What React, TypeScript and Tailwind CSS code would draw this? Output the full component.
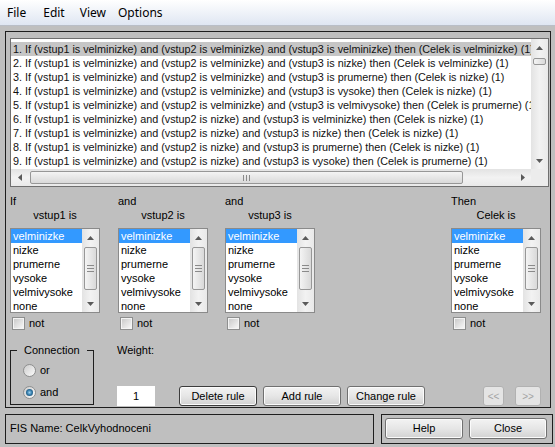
import clsx from 'clsx';

const rules = [
  '1. If (vstup1 is velminizke) and (vstup2 is velminizke) and (vstup3 is velminizke) then (Celek is velminizke) (1)',
  '2. If (vstup1 is velminizke) and (vstup2 is velminizke) and (vstup3 is nizke) then (Celek is velminizke) (1)',
  '3. If (vstup1 is velminizke) and (vstup2 is velminizke) and (vstup3 is prumerne) then (Celek is nizke) (1)',
  '4. If (vstup1 is velminizke) and (vstup2 is velminizke) and (vstup3 is vysoke) then (Celek is nizke) (1)',
  '5. If (vstup1 is velminizke) and (vstup2 is velminizke) and (vstup3 is velmivysoke) then (Celek is prumerne) (1)',
  '6. If (vstup1 is velminizke) and (vstup2 is nizke) and (vstup3 is velminizke) then (Celek is nizke) (1)',
  '7. If (vstup1 is velminizke) and (vstup2 is nizke) and (vstup3 is nizke) then (Celek is nizke) (1)',
  '8. If (vstup1 is velminizke) and (vstup2 is nizke) and (vstup3 is prumerne) then (Celek is nizke) (1)',
  '9. If (vstup1 is velminizke) and (vstup2 is nizke) and (vstup3 is vysoke) then (Celek is prumerne) (1)',
];

const terms = ['velminizke', 'nizke', 'prumerne', 'vysoke', 'velmivysoke', 'none'];

const Arrow = ({ dir }: { dir: 'up' | 'down' | 'left' | 'right' }) => {
  const vert = dir === 'up' || dir === 'down';
  const pts = {
    up: '0,4 3.5,0 7,4',
    down: '0,0 3.5,4 7,0',
    left: '4,0 0,3.5 4,7',
    right: '0,0 4,3.5 0,7',
  }[dir];
  return (
    <svg width={vert ? 7 : 4} height={vert ? 4 : 7} viewBox={vert ? '0 0 7 4' : '0 0 4 7'}>
      <polygon points={pts} fill="#5a5a5a" />
    </svg>
  );
};

// vertical scrollbar, thumb position passed as full class names
const VScroll = ({ thumb, grip }: { thumb: string; grip?: boolean }) => (
  <div className="flex w-[17px] flex-col bg-linear-to-r from-[#e3e3e3] via-[#f2f2f2] to-[#e9e9e9]">
    <div className="flex h-[17px] items-center justify-center">
      <Arrow dir="up" />
    </div>
    <div
      className={clsx(
        'mx-[2px] flex flex-col items-center justify-center gap-[2px] rounded-[2px] border border-[#979797] bg-linear-to-r from-[#f4f4f4] to-[#d9d9d9]',
        thumb
      )}
    >
      {grip && (
        <>
          <span className="h-px w-[7px] bg-[#8a8a8a]" />
          <span className="h-px w-[7px] bg-[#8a8a8a]" />
          <span className="h-px w-[7px] bg-[#8a8a8a]" />
        </>
      )}
    </div>
    <div className="flex-1" />
    <div className="flex h-[17px] items-center justify-center">
      <Arrow dir="down" />
    </div>
  </div>
);

const Check = () => (
  <span className="block h-[13px] w-[13px] border border-[#8e8f8f] bg-[#f4f4f4] p-[1px]">
    <span className="block h-full w-full bg-linear-to-br from-[#cbcbcb] to-[#f6f6f6]" />
  </span>
);

const Radio = ({ on }: { on?: boolean }) => (
  <span className="flex h-[13px] w-[13px] items-center justify-center rounded-full border border-[#8e8f8f] bg-linear-to-br from-[#cdcdcd] to-[#fbfbfb]">
    {on && <span className="h-[7px] w-[7px] rounded-full bg-radial from-[#9ad3f2] via-[#2f78a6] to-[#153a58]" />}
  </span>
);

const Btn = ({ label, className, dark }: { label: string; className: string; dark?: boolean }) => (
  <button
    className={clsx(
      'flex items-center justify-center rounded-[3px] border bg-linear-to-b from-[#f3f3f3] via-[#e6e6e6] to-[#d2d2d2] text-[11px] text-black shadow-[inset_0_0_0_1px_#fbfbfb]',
      dark ? 'border-[#3c3c3c]' : 'border-[#707070]',
      className
    )}
  >
    {label}
  </button>
);

const DimBtn = ({ label, className }: { label: string; className: string }) => (
  <button
    className={clsx(
      'flex items-center justify-center rounded-[3px] border border-[#b1b1b1] bg-[#e4e4e4] text-[10px] text-[#a3a3a3]',
      className
    )}
  >
    {label}
  </button>
);

const Column = ({ head, label, className }: { head: string; label: string; className?: string }) => (
  <div className={clsx('flex w-[90px] flex-col', className)}>
    <div className="h-[14px] leading-[14px]">{head}</div>
    <div className="h-[14px] text-center leading-[14px]">{label}</div>
    <div className="mt-[6px] flex h-[85px] border border-[#8a8a8a] bg-white">
      <div className="flex-1 overflow-hidden">
        {terms.map((t, i) => (
          <div
            key={t}
            className={clsx(
              'h-[14px] pl-[2px] leading-[15px]',
              i === 0 ? 'bg-[#3399ff] text-white' : 'text-black'
            )}
          >
            {t}
          </div>
        ))}
      </div>
      <VScroll thumb="mt-[1px] h-[43px]" grip />
    </div>
    <div className="mt-[4px] ml-[2px] flex h-[13px] items-center">
      <Check />
      <span className="ml-[4px] leading-[13px]">not</span>
    </div>
  </div>
);

const App = () => {
  return (
    <div className="flex h-[447px] w-[555px] flex-col overflow-hidden bg-[#bfbfbf] font-['Liberation_Sans',Arial,sans-serif] text-[11px] text-black">
      {/* menu */}
      <div className="flex h-[26px] items-center border-b border-[#b9bec7] bg-linear-to-b from-[#ffffff] to-[#dfe6f2] font-['Noto_Sans',sans-serif] text-[12px]">
        <span className="ml-[7px]">File</span>
        <span className="ml-[17px]">Edit</span>
        <span className="ml-[15px]">View</span>
        <span className="ml-[12px]">Options</span>
      </div>

      {/* main panel */}
      <div className="mt-[5px] ml-[5px] flex h-[377px] w-[546px] flex-col border border-[#1e1e1e]">
        {/* rule list */}
        <div className="mt-[6px] ml-[4px] flex h-[149px] w-[539px] flex-col border border-[#6f6f6f] bg-white">
          <div className="flex h-[130px]">
            <div className="flex-1 overflow-hidden pt-[3px] text-[10.8px]">
              {rules.map((r, i) => (
                <div
                  key={r}
                  className={clsx(
                    'h-[14px] whitespace-nowrap pl-[2px] leading-[14px] text-[#111]',
                    i === 0 && 'bg-[#c6c6c6]'
                  )}
                >
                  {r}
                </div>
              ))}
            </div>
            <VScroll thumb="mt-[2px] h-[7px]" />
          </div>
          <div className="flex h-[17px]">
            <div className="flex flex-1 items-center bg-linear-to-b from-[#e3e3e3] via-[#f2f2f2] to-[#e9e9e9]">
              <div className="flex h-[17px] w-[17px] items-center justify-center">
                <Arrow dir="left" />
              </div>
              <div className="ml-[2px] flex h-[13px] w-[433px] items-center justify-center gap-[2px] rounded-[2px] border border-[#979797] bg-linear-to-b from-[#f4f4f4] to-[#d9d9d9]">
                <span className="h-[6px] w-px bg-[#8a8a8a]" />
                <span className="h-[6px] w-px bg-[#8a8a8a]" />
                <span className="h-[6px] w-px bg-[#8a8a8a]" />
              </div>
              <div className="flex-1" />
              <div className="flex h-[17px] w-[17px] items-center justify-center">
                <Arrow dir="right" />
              </div>
            </div>
            <div className="w-[17px] bg-[#ececec]" />
          </div>
        </div>

        {/* antecedent / consequent pickers */}
        <div className="mt-[7px] ml-[4px] flex">
          <Column head="If" label="vstup1 is" />
          <Column head="and" label="vstup2 is" className="ml-[18px]" />
          <Column head="and" label="vstup3 is" className="ml-[17px]" />
          <Column head="Then" label="Celek is" className="ml-[136px]" />
        </div>

        {/* connection, weight, buttons */}
        <div className="mt-[13px] ml-[4px] flex items-start">
          <fieldset className="w-[84px] border border-[#1e1e1e] pb-[5px]">
            <legend className="ml-[6px] px-[7px] leading-[14px]">Connection</legend>
            <div className="mt-[6px] flex h-[14px] items-center pl-[12px]">
              <Radio />
              <span className="ml-[4px]">or</span>
            </div>
            <div className="mt-[8px] flex h-[14px] items-center pl-[12px]">
              <Radio on />
              <span className="ml-[4px]">and</span>
            </div>
          </fieldset>

          <div className="ml-[23px] flex flex-col">
            <div className="leading-[14px]">Weight:</div>
            <div className="mt-[29px] flex h-[20px] w-[38px] items-center justify-center bg-white">1</div>
          </div>

          <div className="mt-[43px] ml-[24px] flex">
            <Btn label="Delete rule" className="h-[20px] w-[78px]" dark />
            <Btn label="Add rule" className="ml-[6px] h-[20px] w-[78px]" />
            <Btn label="Change rule" className="ml-[6px] h-[20px] w-[78px]" />
            <DimBtn label="<<" className="ml-[58px] h-[20px] w-[21px]" />
            <DimBtn label=">>" className="ml-[11px] h-[20px] w-[26px]" />
          </div>
        </div>
      </div>

      {/* status / help */}
      <div className="mt-[6px] ml-[5px] flex">
        <div className="h-[30px] w-[369px] border border-[#1e1e1e] pt-[6px] pl-[4px] leading-[14px]">
          FIS Name: CelkVyhodnoceni
        </div>
        <div className="ml-[7px] flex h-[30px] w-[172px] border border-[#1e1e1e] pt-[3px] pl-[3px]">
          <Btn label="Help" className="h-[21px] w-[78px]" />
          <Btn label="Close" className="ml-[6px] h-[21px] w-[78px]" />
        </div>
      </div>
    </div>
  );
};

export default App;
